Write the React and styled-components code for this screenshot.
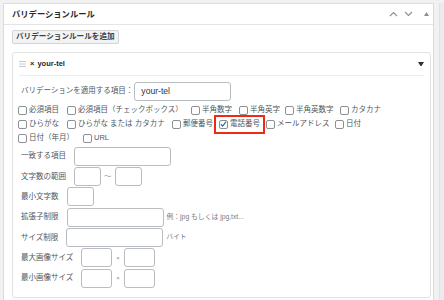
import React from "react";
import styled, { createGlobalStyle } from "styled-components";

const Global = createGlobalStyle`
  html, body { margin: 0; padding: 0; }
  body {
    background: #f1f1f1;
    font-family: "Liberation Sans", "Noto Sans CJK JP", sans-serif;
    color: #3c434a;
    overflow: hidden;
  }
  * { box-sizing: border-box; }
`;

const Page = styled.div`
  display: flex;
  height: 300px;
  padding: 3px 0 0 3px;
`;

const Panel = styled.section`
  width: 431px;
  flex: none;
  background: #fff;
  border: 1px solid #dcdcde;
  border-bottom: none;
  display: flex;
  flex-direction: column;
`;

const Rail = styled.div`
  margin-left: 5px;
  flex: 1;
  background: #ebebeb;
  border-left: 1px solid #e2e2e2;
`;

const PanelHeader = styled.header`
  height: 21px;
  flex: none;
  display: flex;
  align-items: center;
  padding: 0 0 0 8px;
  border-bottom: 1px solid #e4e4e4;
`;

const PanelTitle = styled.h2`
  margin: 0;
  flex: 1;
  font-size: 8.3px;
  font-weight: 700;
  color: #23282d;
  line-height: 1;
`;

const HeaderIcons = styled.div`
  display: flex;
  align-items: center;
  gap: 6px;
  padding-right: 4.5px;
  color: #8c8f94;
`;

const ToggleIcon = styled.span`
  display: flex;
  margin-left: 5px;
`;

const PanelBody = styled.div`
  padding: 5px 2px 0 8px;
  display: flex;
  flex-direction: column;
  align-items: flex-start;
`;

const AddButton = styled.button`
  height: 14px;
  padding: 0 3px;
  font-family: inherit;
  font-size: 7.6px;
  font-weight: 700;
  color: #3c434a;
  background: #f3f3f3;
  border: 1px solid #d4d4d4;
  border-radius: 2px;
  line-height: 1;
  display: flex;
  align-items: center;
`;

const Card = styled.div`
  margin-top: 8px;
  width: 419px;
  border: 1px solid #e2e2e2;
  border-radius: 3px;
  padding: 0 5px 9px 5px;
`;

const CardHeader = styled.div`
  height: 23px;
  margin: 0 1px;
  display: flex;
  align-items: center;
  border-bottom: 1px solid #ececec;
  gap: 4px;
`;

const CardTitle = styled.span`
  flex: 1;
  font-size: 7.5px;
  font-weight: 700;
  color: #23282d;
  line-height: 1;
`;

const Content = styled.div`
  padding-top: 4px;
  display: flex;
  flex-direction: column;
`;

const FieldRow = styled.div`
  display: flex;
  align-items: center;
  height: ${(p) => p.$h || 20.35}px;
  padding-left: 3px;
`;

const Label = styled.span`
  font-size: 7.5px;
  color: #50575e;
  line-height: 1;
  white-space: nowrap;
  margin-right: ${(p) => p.$gap ?? 8}px;
`;

const Input = styled.div`
  width: ${(p) => p.$w}px;
  height: 19px;
  border: 1px solid #b9bcc0;
  border-radius: 3px;
  background: #fff;
  display: flex;
  align-items: center;
  padding-left: 6px;
  font-size: 8.6px;
  color: #2c3338;
`;

const Sep = styled.span`
  font-size: ${(p) => p.$size || 7.5}px;
  color: #8a8f94;
  margin: 0 ${(p) => p.$m || 4}px;
  line-height: 1;
`;

const Hint = styled.span`
  font-size: 6.8px;
  color: #787c82;
  margin-left: 3px;
  line-height: 1;
  white-space: nowrap;
`;

const CheckGroup = styled.div`
  display: flex;
  flex-direction: column;
  padding: 1px 0 1px 0;
`;

const CheckRow = styled.div`
  display: flex;
  align-items: center;
  height: 14px;
`;

const CheckSlot = styled.div`
  flex: none;
  width: ${(p) => (p.$w ? `${p.$w}px` : "auto")};
  display: flex;
`;

const CheckItem = styled.label`
  display: flex;
  align-items: center;
  gap: 2px;
  font-size: 7.5px;
  color: #50575e;
  line-height: 1;
  white-space: nowrap;
  outline: ${(p) => (p.$highlight ? "2px solid #ee2a17" : "none")};
  outline-offset: ${(p) => (p.$highlight ? "3px" : "0")};
`;

const Box = styled.span`
  width: 9px;
  height: 9px;
  flex: none;
  border: 1px solid #8c8f94;
  border-radius: 2px;
  background: #fff;
  display: flex;
  align-items: center;
  justify-content: center;
`;

const Check = ({ label, checked, highlight, w }) => (
  <CheckSlot $w={w}>
    <CheckItem $highlight={highlight}>
      <Box>
        {checked && (
          <svg width="8" height="8" viewBox="0 0 8 8">
            <path d="M1 4.3 L3 6.3 L7 1.2" fill="none" stroke="#2271b1" strokeWidth="1.4" />
          </svg>
        )}
      </Box>
      {label}
    </CheckItem>
  </CheckSlot>
);

const Chevron = ({ up }) => (
  <svg width="9" height="6" viewBox="0 0 9 6">
    <path
      d={up ? "M1 5 L4.5 1.5 L8 5" : "M1 1 L4.5 4.5 L8 1"}
      fill="none"
      stroke="#8c8f94"
      strokeWidth="1.1"
    />
  </svg>
);

const Tri = ({ down, color, size = 5 }) => (
  <svg width={size} height={size * 0.8} viewBox="0 0 10 8">
    <path d={down ? "M0 0 L10 0 L5 8 Z" : "M0 8 L10 8 L5 0 Z"} fill={color} />
  </svg>
);

const Handle = () => (
  <svg width="7" height="6" viewBox="0 0 7 6">
    <path d="M0 0.5 H7 M0 3 H7 M0 5.5 H7" stroke="#c3c4c7" strokeWidth="0.9" />
  </svg>
);

export default function App() {
  return (
    <>
      <Global />
      <Page>
        <Panel>
          <PanelHeader>
            <PanelTitle>バリデーションルール</PanelTitle>
            <HeaderIcons>
              <Chevron up />
              <Chevron />
              <ToggleIcon>
                <Tri color="#8c8f94" size={5} />
              </ToggleIcon>
            </HeaderIcons>
          </PanelHeader>
          <PanelBody>
            <AddButton>バリデーションルールを追加</AddButton>
            <Card>
              <CardHeader>
                <Handle />
                <CardTitle>
                  <span style={{ marginRight: 3 }}>×</span>your-tel
                </CardTitle>
                <Tri down color="#2c3338" size={6} />
              </CardHeader>
              <Content>
                <FieldRow $h={22}>
                  <Label $gap={1}>バリデーションを適用する項目：</Label>
                  <Input $w={97}>your-tel</Input>
                </FieldRow>
                <CheckGroup>
                  <CheckRow>
                    <Check w={49} label="必須項目" />
                    <Check w={124} label="必須項目（チェックボックス）" />
                    <Check w={48} label="半角数字" />
                    <Check w={46} label="半角英字" />
                    <Check w={55} label="半角英数字" />
                    <Check label="カタカナ" />
                  </CheckRow>
                  <CheckRow>
                    <Check w={49} label="ひらがな" />
                    <Check w={105} label="ひらがな または カタカナ" />
                    <Check w={47} label="郵便番号" />
                    <Check w={47} label="電話番号" checked highlight />
                    <Check w={69} label="メールアドレス" />
                    <Check label="日付" />
                  </CheckRow>
                  <CheckRow>
                    <Check w={65} label="日付（年月）" />
                    <Check label="URL" />
                  </CheckRow>
                </CheckGroup>
                <FieldRow>
                  <Label>一致する項目</Label>
                  <Input $w={97} />
                </FieldRow>
                <FieldRow>
                  <Label>文字数の範囲</Label>
                  <Input $w={27} />
                  <Sep $m={3}>～</Sep>
                  <Input $w={27} />
                </FieldRow>
                <FieldRow>
                  <Label>最小文字数</Label>
                  <Input $w={27} />
                </FieldRow>
                <FieldRow>
                  <Label>拡張子制限</Label>
                  <Input $w={97} />
                  <Hint>例：jpg もしくは jpg,txt...</Hint>
                </FieldRow>
                <FieldRow>
                  <Label>サイズ制限</Label>
                  <Input $w={97} />
                  <Hint>バイト</Hint>
                </FieldRow>
                <FieldRow>
                  <Label>最大画像サイズ</Label>
                  <Input $w={31} />
                  <Sep $size={6} $m={4}>×</Sep>
                  <Input $w={31} />
                </FieldRow>
                <FieldRow>
                  <Label>最小画像サイズ</Label>
                  <Input $w={31} />
                  <Sep $size={6} $m={4}>×</Sep>
                  <Input $w={31} />
                </FieldRow>
              </Content>
            </Card>
          </PanelBody>
        </Panel>
        <Rail />
      </Page>
    </>
  );
}
